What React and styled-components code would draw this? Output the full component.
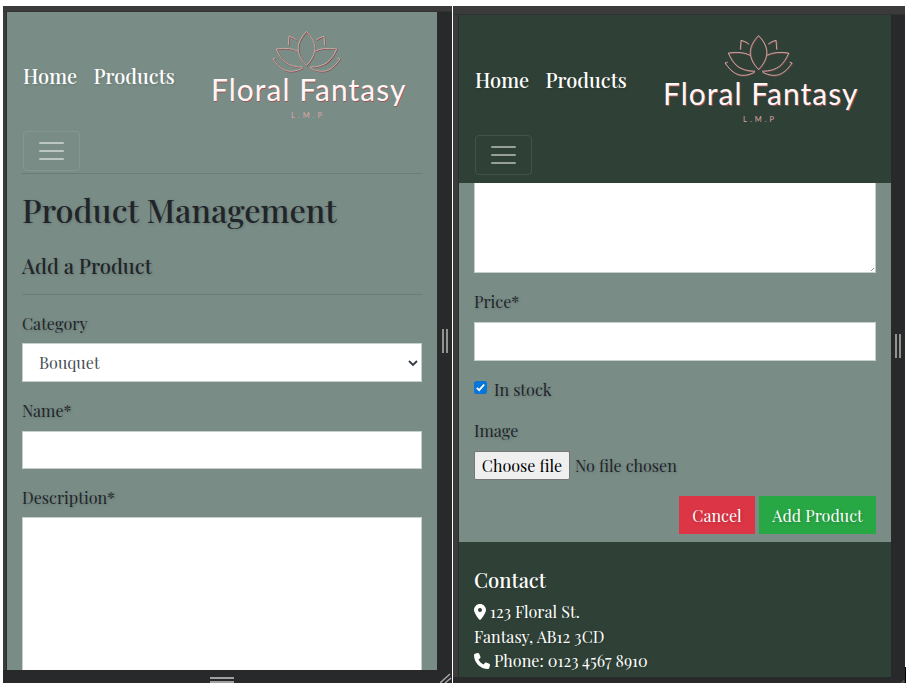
import React from "react";
import styled, { createGlobalStyle } from "styled-components";

const GlobalStyle = createGlobalStyle`
  *, *::before, *::after { box-sizing: border-box; }
  body { margin: 0; background: #fff; overflow: hidden; }
`;

const Page = styled.main`
  width: 907px;
  height: 687px;
  padding-top: 6px;
  display: flex;
  background: #fff;
  color: #212529;
  font-family: "Playfair Display", "Liberation Serif", serif;
  font-size: 16.15px;
  text-shadow: 1px 1px 3px rgba(0, 0, 0, 0.16);
`;

const DeviceFrame = styled.section`
  width: ${(p) => p.$width}px;
  height: 677px;
  margin-left: ${(p) => p.$gap}px;
  display: grid;
  grid-template-columns: ${(p) => p.$columns};
  grid-template-rows: ${(p) => p.$rows};
  background: #28292b;
`;

const TopEdge = styled.div`
  grid-column: 1 / -1;
  background: #3b3b3b;
  border-bottom: 1px solid #303131;
`;

const SideEdge = styled.div`
  background: #3b3b3b;
  border-right: 1px solid #2c2d2d;
`;

const Viewport = styled.div`
  overflow: hidden;
  min-width: 0;
  background: #798c86;
  display: flex;
  flex-direction: column;
`;

const SideGutter = styled.div`
  display: flex;
  justify-content: center;
  gap: 2px;
  padding-top: ${(p) => p.$offset}px;
`;

const GripBar = styled.i`
  width: 2px;
  height: 24px;
  background: #929292;
`;

const BottomGutter = styled.div`
  grid-column: 1 / -1;
  display: flex;
  justify-content: space-between;
  align-items: flex-end;
  overflow: hidden;
  padding-left: ${(p) => p.$indent}px;
`;

const BottomGrip = styled.div`
  width: 24px;
  height: 6px;
  border: solid #a0a0a0;
  border-width: 2px 0;
`;

const CornerGrip = styled.svg`
  display: block;
  flex: none;
`;

const Header = styled.header`
  flex: none;
  height: ${(p) => p.$height}px;
  padding: ${(p) => p.$top}px 16px 0 ${(p) => p.$left}px;
  background: ${(p) => (p.$solid ? "#2f4036" : "transparent")};
`;

const NavRow = styled.nav`
  height: 119px;
  padding-top: 8px;
  display: flex;
  align-items: center;
  color: #fff;
  font-size: 20px;
  font-weight: 500;
`;

const NavLink = styled.a`
  width: ${(p) => p.$width}px;
  white-space: nowrap;
`;

const LogoArt = styled.svg`
  display: block;
  flex: none;
  margin: 0 0 2px;
  overflow: visible;
  font-weight: 400;
  text-shadow: none;
`;

const Toggler = styled.button`
  width: 57px;
  height: 40px;
  padding: 0;
  display: flex;
  flex-direction: column;
  align-items: center;
  justify-content: center;
  gap: 6px;
  background: transparent;
  border: 1px solid rgba(255, 255, 255, 0.1);
  border-radius: 4px;
`;

const TogglerLine = styled.span`
  width: 25px;
  height: 2px;
  border-radius: 1px;
  background: rgba(255, 255, 255, 0.5);
`;

const Content = styled.div`
  flex: none;
  padding: 0 15px 0 ${(p) => p.$left}px;
`;

const Rule = styled.hr`
  height: 1px;
  margin: 0;
  border: 0;
  background: rgba(0, 0, 0, 0.1);
`;

const Title = styled.h1`
  height: 75px;
  margin: 0;
  font-weight: 500;
  font-size: 32.4px;
  line-height: 72px;
  white-space: nowrap;
`;

const Subtitle = styled.h2`
  height: 45px;
  margin: 0;
  font-weight: 500;
  font-size: 20.25px;
  line-height: 34px;
`;

const Label = styled.label`
  display: block;
  height: ${(p) => p.$height}px;
  padding-top: ${(p) => p.$top}px;
  line-height: 24px;
  white-space: nowrap;
`;

const Field = styled.div`
  height: ${(p) => p.$height}px;
  padding: 0 2px 0 16px;
  display: flex;
  align-items: center;
  justify-content: space-between;
  background: #fff;
  border: 1px solid #c6cfce;
  border-top-width: ${(p) => (p.$continued ? 0 : 1)}px;
  color: #495057;
  text-shadow: none;
`;

const TextAreaField = styled(Field)`
  align-items: flex-end;
  justify-content: flex-end;
  padding: 0 1px 1px;
`;

const CheckRow = styled.div`
  height: 53px;
  padding-top: 17px;
  display: flex;
  gap: 7px;
  line-height: 24px;
`;

const CheckBox = styled.span`
  width: 13px;
  height: 13px;
  margin-top: 3px;
  display: grid;
  place-items: center;
  background: #0875d9;
  border-radius: 2.5px;
`;

const FileRow = styled.div`
  height: 29px;
  display: flex;
  align-items: center;
  gap: 5px;
  line-height: 28px;
`;

const FileButton = styled.button`
  width: 96px;
  height: 29px;
  padding: 0;
  font: inherit;
  line-height: 26px;
  color: #000;
  background: #efefef;
  border: 1px solid #767676;
  border-radius: 2px;
  white-space: nowrap;
`;

const Actions = styled.div`
  height: 62px;
  padding-top: 16px;
  display: flex;
  justify-content: flex-end;
  gap: 4px;
`;

const ActionButton = styled.button`
  width: ${(p) => p.$width}px;
  height: 38px;
  padding: 0;
  border: 0;
  background: ${(p) => p.$color};
  color: #fff;
  font: inherit;
  text-shadow: 1px 1px 3px rgba(0, 0, 0, 0.2);
`;

const Footer = styled.footer`
  flex: 1;
  padding: 20px 15px 0;
  background: #2f4036;
  color: #fff;
`;

const FooterTitle = styled.h3`
  height: 38px;
  margin: 0;
  font-size: 20.25px;
  line-height: 35px;
  font-weight: 500;
`;

const ContactLine = styled.div`
  height: 24.4px;
  display: flex;
  align-items: center;
  gap: 4px;
  line-height: 24px;
  white-space: pre;
`;

const ScreenEdge = styled.div`
  width: 1px;
  height: 16px;
  margin-top: 661px;
  background: #000;
`;

function LotusHalf() {
  return (
    <>
      <path d="M306.5 31.5 C295.5 43 295.5 54 306.5 65.5" />
      <path d="M288.3 45.5 L289 36.3 Q293 37 296.8 40" />
      <path d="M298 51.2 Q290 47 276.3 49 C281 60 287 67 303 67.2" />
      <path d="M275.5 58 L273 59 C280 69 288 75.5 302.5 68.2" />
    </>
  );
}

function Logo() {
  return (
    <LogoArt width="204" height="98" viewBox="206 26 204 98" role="img" aria-label="Floral Fantasy L.M.P">
      <g fill="none" stroke="#8a4c4d" strokeWidth="1.1" transform="translate(.55 .55)">
        <LotusHalf />
        <g transform="matrix(-1 0 0 1 613 0)"><LotusHalf /></g>
      </g>
      <g fill="none" stroke="#dcc3be" strokeWidth=".75">
        <LotusHalf />
        <g transform="matrix(-1 0 0 1 613 0)"><LotusHalf /></g>
      </g>
      <g fontFamily="Lato, sans-serif" fontSize="30">
        <text x="211.6" y="101.8" textLength="194.5" fill="#9c5557">Floral Fantasy</text>
        <text x="211" y="101.2" textLength="194.5" fill="#fff6f5">Floral Fantasy</text>
      </g>
      <text x="291" y="118" textLength="31" fontFamily="Lato, sans-serif" fontSize="7.5" fill="#dba6a3">L.M.P</text>
    </LogoArt>
  );
}

function SiteHeader({ solid, height, top, left }) {
  return (
    <Header $solid={solid} $height={height} $top={top} $left={left}>
      <NavRow>
        <NavLink $width={70.5}>Home</NavLink>
        <NavLink $width={112.5}>Products</NavLink>
        <Logo />
      </NavRow>
      <Toggler aria-label="Toggle navigation">
        <TogglerLine /><TogglerLine /><TogglerLine />
      </Toggler>
    </Header>
  );
}

function SideGrip({ offset }) {
  return <SideGutter $offset={offset}><GripBar /><GripBar /></SideGutter>;
}

function Corner({ size }) {
  return (
    <CornerGrip width={size} height={size} viewBox="0 0 12 12" stroke="#aaa" strokeWidth="1.4">
      <path d="M0 12 L10 3 M5 12 L11 7" />
    </CornerGrip>
  );
}

export default function App() {
  return (
    <>
      <GlobalStyle />
      <Page>
        <DeviceFrame $width={449} $gap={3} $columns="4px 430px 15px" $rows="6px 658px 13px">
          <TopEdge />
          <SideEdge />
          <Viewport>
            <SiteHeader height={161} top={0} left={16} />
            <Content $left={15}>
              <Rule />
              <Title>Product Management</Title>
              <Subtitle>Add a Product</Subtitle>
              <Rule />
              <Label $height={48} $top={17}>Category</Label>
              <Field $height={39}>
                Bouquet
                <svg width="12" height="12" viewBox="0 0 12 12" fill="none" stroke="#343a40" strokeWidth="1.8">
                  <path d="M2 4 L6 8 L10 4" />
                </svg>
              </Field>
              <Label $height={49} $top={17}>Name*</Label>
              <Field $height={38} />
              <Label $height={48} $top={17}>Description*</Label>
              <TextAreaField $height={240} />
            </Content>
          </Viewport>
          <SideGrip offset={317} />
          <BottomGutter $indent={207}>
            <BottomGrip />
            <Corner size={12} />
          </BottomGutter>
        </DeviceFrame>
        <DeviceFrame $width={452} $gap={1} $columns="6px 432px 14px" $rows="9px 662px 6px">
          <TopEdge />
          <SideEdge />
          <Viewport>
            <SiteHeader solid height={168} top={1} left={16} />
            <Content $left={15}>
              <TextAreaField $height={90} $continued>
                <svg width="3" height="3" stroke="#999" strokeWidth="1"><path d="M0 3L3 0" /></svg>
              </TextAreaField>
              <Label $height={49} $top={17}>Price*</Label>
              <Field $height={39} />
              <CheckRow>
                <CheckBox>
                  <svg width="11" height="11" viewBox="0 0 11 11" fill="none" stroke="#fff" strokeWidth="1.8">
                    <path d="M1.8 5.8 L4.2 8.2 L9.2 2.5" />
                  </svg>
                </CheckBox>
                In stock
              </CheckRow>
              <Label $height={37} $top={5}>Image</Label>
              <FileRow><FileButton>Choose file</FileButton>No file chosen</FileRow>
              <Actions>
                <ActionButton $width={76} $color="#dc3545">Cancel</ActionButton>
                <ActionButton $width={117} $color="#28a745">Add Product</ActionButton>
              </Actions>
            </Content>
            <Footer>
              <FooterTitle>Contact</FooterTitle>
              <ContactLine>
                <svg width="12" height="16" viewBox="0 0 384 512" fill="#fff">
                  <path d="M215.7 499.2C267 435 384 279.4 384 192 384 86 298 0 192 0S0 86 0 192c0 87.4 117 243 168.3 307.2 12.3 15.3 35.1 15.3 47.4 0zM192 128a64 64 0 1 1 0 128 64 64 0 1 1 0-128z" />
                </svg>
                <span>123 Floral St.</span>
              </ContactLine>
              <ContactLine>
                <span>Fantasy, AB12 3CD</span>
              </ContactLine>
              <ContactLine>
                <svg width="16" height="16" viewBox="0 0 512 512" fill="#fff">
                  <path d="M164.9 24.6c-7.7-18.6-28-28.5-47.4-23.2l-88 24C12.1 30.2 0 46 0 64c0 247.4 200.6 448 448 448 18 0 33.8-12.1 38.6-29.5l24-88c5.3-19.4-4.6-39.7-23.2-47.4l-96-40c-16.3-6.8-35.2-2.1-46.3 11.6L304.7 368C234.3 334.7 177.3 277.7 144 207.3L193.3 167c13.7-11.2 18.4-30 11.6-46.3l-40-96z" />
                </svg>
                <span>Phone: 0123 4567 8910</span>
              </ContactLine>
            </Footer>
          </Viewport>
          <SideGrip offset={319} />
          <BottomGutter $indent={448}>
            <Corner size={4} />
          </BottomGutter>
        </DeviceFrame>
        <ScreenEdge />
      </Page>
    </>
  );
}
